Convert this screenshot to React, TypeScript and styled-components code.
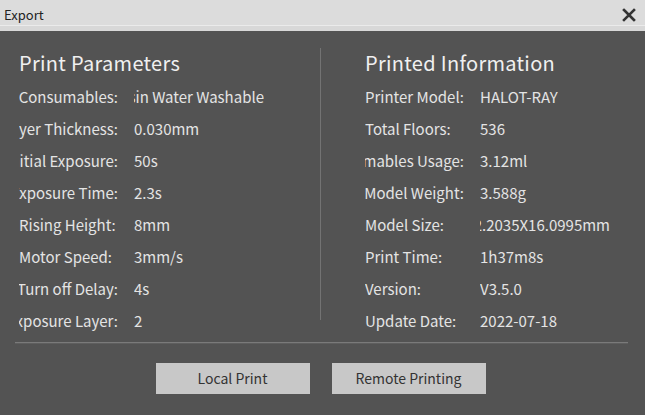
import React from 'react'
import styled, { createGlobalStyle } from 'styled-components'

const GlobalStyle = createGlobalStyle`
  html, body {
    margin: 0;
    padding: 0;
    background: #535353;
  }
  * {
    box-sizing: border-box;
  }
`

const Dialog = styled.div`
  width: 645px;
  height: 415px;
  background: #535353;
  font-family: 'Noto Sans CJK SC', 'Noto Sans', sans-serif;
  display: flex;
  flex-direction: column;
  overflow: hidden;
`

const TitleBar = styled.div`
  height: 31px;
  display: flex;
  align-items: flex-start;
  justify-content: space-between;
  padding: 6px 8px 0 4px;
  background: linear-gradient(#dcdcdc 0 25px, #ebebeb 25px 26px, #d8d8d8 26px);
  color: #222;
  font-size: 13px;
  line-height: 18px;
`

const CloseButton = styled.button`
  border: none;
  background: transparent;
  padding: 0;
  margin-top: 1px;
  width: 16px;
  height: 16px;
  display: flex;
  align-items: center;
  justify-content: center;
  cursor: pointer;
`

const Body = styled.div`
  display: flex;
  padding-top: 14px;
`

const Column = styled.div<{ $pad: number; $width?: number }>`
  padding-left: ${(p) => p.$pad}px;
  width: ${(p) => (p.$width ? `${p.$width}px` : 'auto')};
  flex: ${(p) => (p.$width ? 'none' : '1')};
`

const Heading = styled.div`
  color: #f0f0f0;
  font-size: 20px;
  line-height: 36px;
  letter-spacing: 0.3px;
`

const Row = styled.div`
  display: flex;
  height: 31.9px;
  align-items: center;
  font-size: 15px;
  color: #e4e4e4;
`

const Cell = styled.div<{ $width: number; $gap?: number }>`
  width: ${(p) => p.$width}px;
  margin-left: ${(p) => p.$gap ?? 0}px;
  flex: none;
  overflow: hidden;
  white-space: nowrap;
  direction: rtl;
  text-align: left;

  span {
    direction: ltr;
    unicode-bidi: isolate;
  }
`

const Divider = styled.div`
  width: 1px;
  height: 272px;
  margin-top: 3px;
  background: #737373;
  flex: none;
`

const Rule = styled.div`
  margin: 6px 17px 0 15px;
  border-top: 1px solid #7a7a7a;
  border-bottom: 1px solid #5e5e5e;
`

const Actions = styled.div`
  display: flex;
  justify-content: center;
  gap: 22px;
  padding-top: 19px;
  padding-right: 4px;
`

const ActionButton = styled.button`
  width: 154px;
  height: 31px;
  border: none;
  border-radius: 0;
  padding: 0 0 2px;
  background: #c8c8c8;
  color: #333;
  font-family: 'Noto Sans CJK SC', 'Noto Sans', sans-serif;
  font-size: 14px;
  cursor: pointer;
`

const PARAMS = [
  ['Consumables:', 'Resin Water Washable'],
  ['Layer Thickness:', '0.030mm'],
  ['Initial Exposure:', '50s'],
  ['Exposure Time:', '2.3s'],
  ['Rising Height:', '8mm'],
  ['Motor Speed:', '3mm/s'],
  ['Turn off Delay:', '4s'],
  ['Exposure Layer:', '2'],
]

const INFO = [
  ['Printer Model:', 'HALOT-RAY'],
  ['Total Floors:', '536'],
  ['Consumables Usage:', '3.12ml'],
  ['Model Weight:', '3.588g'],
  ['Model Size:', '26.5X22.2035X16.0995mm'],
  ['Print Time:', '1h37m8s'],
  ['Version:', 'V3.5.0'],
  ['Update Date:', '2022-07-18'],
]

const InfoRows = ({ rows }: { rows: string[][] }) => (
  <>
    {rows.map(([label, value]) => (
      <Row key={label}>
        <Cell $width={99}>
          <span>{label}</span>
        </Cell>
        <Cell $width={130} $gap={16}>
          <span>{value}</span>
        </Cell>
      </Row>
    ))}
  </>
)

const App = () => {
  return (
    <Dialog>
      <GlobalStyle />
      <TitleBar>
        <span>Export</span>
        <CloseButton aria-label='close'>
          <svg width='14' height='14' viewBox='0 0 14 14'>
            <path d='M2 2 L12 12 M12 2 L2 12' stroke='#333' strokeWidth='2.6' strokeLinecap='square' />
          </svg>
        </CloseButton>
      </TitleBar>
      <Body>
        <Column $pad={19} $width={320}>
          <Heading>Print Parameters</Heading>
          <InfoRows rows={PARAMS} />
        </Column>
        <Divider />
        <Column $pad={44}>
          <Heading>Printed Information</Heading>
          <InfoRows rows={INFO} />
        </Column>
      </Body>
      <Rule />
      <Actions>
        <ActionButton>Local Print</ActionButton>
        <ActionButton>Remote Printing</ActionButton>
      </Actions>
    </Dialog>
  )
}

export default App
